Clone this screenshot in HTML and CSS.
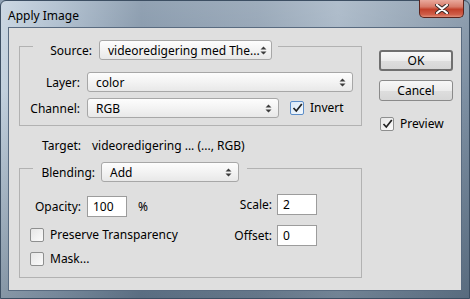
FILE: index.html
```html
<!DOCTYPE html>
<html lang="en">

<head>
    <meta charset="UTF-8">
    <meta name="viewport" content="width=device-width, initial-scale=1.0">
    <title>Apply Image</title>
    <link rel="stylesheet" href="styles.css">
</head>

<body>
    <div class="window">
        <div class="titlebar">
            <span class="title">Apply Image</span>
            <div class="close">
                <svg width="14" height="10" viewBox="0 0 14 10">
                    <path d="M2 1 L12 9 M12 1 L2 9" stroke="#3a2a28" stroke-width="4" stroke-linecap="round" />
                    <path d="M2 1 L12 9 M12 1 L2 9" stroke="#fff" stroke-width="2.2" stroke-linecap="round" />
                </svg>
            </div>
        </div>
        <div class="client">
            <div class="main">
                <div class="group group-source">
                    <div class="group-head head-source">
                        <span class="head-label">Source:</span>
                        <div class="select select-source">
                            <span>videoredigering med The...</span>
                            <svg class="arrows" width="7" height="9" viewBox="0 0 7 9"><path d="M0.5 3.5 L3.5 0.5 L6.5 3.5 Z M0.5 5.5 L3.5 8.5 L6.5 5.5 Z" /></svg>
                        </div>
                    </div>
                    <div class="row row-layer">
                        <span class="label">Layer:</span>
                        <div class="select select-layer">
                            <span>color</span>
                            <svg class="arrows" width="7" height="9" viewBox="0 0 7 9"><path d="M0.5 3.5 L3.5 0.5 L6.5 3.5 Z M0.5 5.5 L3.5 8.5 L6.5 5.5 Z" /></svg>
                        </div>
                    </div>
                    <div class="row row-channel">
                        <span class="label">Channel:</span>
                        <div class="select select-channel">
                            <span>RGB</span>
                            <svg class="arrows" width="7" height="9" viewBox="0 0 7 9"><path d="M0.5 3.5 L3.5 0.5 L6.5 3.5 Z M0.5 5.5 L3.5 8.5 L6.5 5.5 Z" /></svg>
                        </div>
                        <label class="option option-invert">
                            <span class="check focused">
                                <svg width="11" height="10" viewBox="0 0 11 10"><path d="M1.5 5 L4.3 8 L9.8 1" fill="none" stroke="#222" stroke-width="1.7" /></svg>
                            </span>
                            Invert
                        </label>
                    </div>
                </div>

                <div class="target">
                    <span class="label">Target:</span>
                    <span class="target-value">videoredigering ... (..., RGB)</span>
                </div>

                <div class="group group-blend">
                    <div class="group-head head-blend">
                        <span class="head-label">Blending:</span>
                        <div class="select select-blend">
                            <span>Add</span>
                            <svg class="arrows" width="7" height="9" viewBox="0 0 7 9"><path d="M0.5 3.5 L3.5 0.5 L6.5 3.5 Z M0.5 5.5 L3.5 8.5 L6.5 5.5 Z" /></svg>
                        </div>
                    </div>
                    <div class="blend-body">
                        <div class="blend-left">
                            <div class="row row-opacity">
                                <span class="label">Opacity:</span>
                                <span class="field">100</span>
                                <span class="unit">%</span>
                            </div>
                            <label class="option option-preserve">
                                <span class="check"></span>
                                Preserve Transparency
                            </label>
                            <label class="option option-mask">
                                <span class="check"></span>
                                Mask...
                            </label>
                        </div>
                        <div class="blend-right">
                            <div class="row row-scale">
                                <span class="label">Scale:</span>
                                <span class="field">2</span>
                            </div>
                            <div class="row row-offset">
                                <span class="label">Offset:</span>
                                <span class="field">0</span>
                            </div>
                        </div>
                    </div>
                </div>
            </div>

            <div class="side">
                <button class="btn btn-default">OK</button>
                <button class="btn btn-cancel">Cancel</button>
                <label class="option option-preview">
                    <span class="check">
                        <svg width="11" height="10" viewBox="0 0 11 10"><path d="M1.5 5 L4.3 8 L9.8 1" fill="none" stroke="#222" stroke-width="1.7" /></svg>
                    </span>
                    Preview
                </label>
            </div>
        </div>
    </div>
</body>

</html>
```

FILE: styles.css
```css
body {
    margin: 0;
    padding: 0;
    width: 470px;
    height: 299px;
    overflow: hidden;
    background-color: #8fa1b4;
    font-family: "Noto Sans", "Open Sans", Arial, sans-serif;
    font-size: 12px;
    color: #000;
}

.window {
    box-sizing: border-box;
    width: 470px;
    height: 299px;
    display: flex;
    flex-direction: column;
    padding: 0 7px 7px 7px;
    border: 1px solid #3d4f63;
    border-radius: 6px 6px 0 0;
    background:
        linear-gradient(to bottom, rgba(255, 255, 255, 0.15) 0%, rgba(0, 0, 0, 0) 30%, rgba(20, 40, 60, 0.35) 100%),
        linear-gradient(to right, #c3d1de 0%, #a9bacb 12%, #7f92a6 30%, #8e9fb1 55%, #a3b3c3 72%, #7d8fa2 100%);
}

.titlebar {
    height: 26px;
    display: flex;
    align-items: flex-start;
    justify-content: space-between;
}

.title {
    margin-top: 6px;
    font-size: 12px;
    color: #000;
}

.close {
    width: 45px;
    height: 18px;
    margin-top: -1px;
    margin-right: -2px;
    display: flex;
    align-items: center;
    justify-content: center;
    box-sizing: border-box;
    border: 1px solid #5c241d;
    border-top: none;
    border-radius: 0 0 5px 5px;
    background: linear-gradient(to bottom, #e9a99c 0%, #d77a68 40%, #c2402a 55%, #cf5d48 85%, #e08f7a 100%);
}

.client {
    flex: 1;
    display: flex;
    border: 1px solid #596b80;
    background-color: #dfdfdf;
}

.main {
    width: 343px;
    margin-left: 10px;
}

.group {
    border: 1px solid #b2b2b2;
}

.group-source {
    margin-top: 18px;
    padding-bottom: 7px;
}

.group-head {
    display: flex;
    align-items: center;
    width: fit-content;
    margin-top: -7px;
    margin-left: 13px;
    background-color: #dfdfdf;
}

.head-label {
    text-align: right;
}

.head-source {
    padding-right: 6px;
}

.head-source .head-label {
    width: 59px;
    margin-right: 7px;
}

.head-blend {
    padding-right: 8px;
}

.head-blend .head-label {
    width: 62px;
    margin-right: 6px;
}

.select {
    box-sizing: border-box;
    height: 20px;
    display: flex;
    align-items: center;
    justify-content: space-between;
    padding: 0 6px 0 8px;
    border: 1px solid #a7a7a7;
    border-radius: 3px;
    background: linear-gradient(to bottom, #fdfdfd 0%, #f3f3f3 50%, #e8e8e8 100%);
    white-space: nowrap;
}

.arrows {
    fill: #3c3c3c;
    flex-shrink: 0;
}

.select-source {
    width: 173px;
}

.select-layer {
    width: 266px;
}

.select-channel {
    width: 192px;
}

.select-blend {
    width: 138px;
}

.row {
    display: flex;
    align-items: center;
}

.label {
    text-align: right;
    flex-shrink: 0;
}

.group-source .row .label {
    width: 60px;
    margin-right: 7px;
}

.row-layer {
    margin-top: 12px;
}

.row-channel {
    margin-top: 6px;
}

.option {
    display: flex;
    align-items: center;
    line-height: 14px;
}

.check {
    box-sizing: border-box;
    width: 14px;
    height: 14px;
    margin-right: 6px;
    display: flex;
    align-items: center;
    justify-content: center;
    border: 1px solid #8e8f8f;
    border-radius: 2px;
    background: linear-gradient(to bottom right, #e6e6e6 0%, #fbfbfb 100%);
}

.check.focused {
    border-color: #5b8dc9;
    background: linear-gradient(to bottom right, #dbe9f7 0%, #f2f8fd 100%);
}

.option-invert {
    margin-left: 11px;
}

.target {
    display: flex;
    align-items: center;
    height: 20px;
    margin-top: 9px;
    padding-left: 1px;
}

.target .label {
    width: 61px;
    margin-right: 11px;
}

.group-blend {
    margin-top: 13px;
    padding-bottom: 11px;
}

.blend-body {
    display: flex;
    justify-content: space-between;
}

.field {
    box-sizing: border-box;
    width: 40px;
    height: 21px;
    display: flex;
    align-items: center;
    padding-left: 5px;
    border: 1px solid #9c9c9c;
    background-color: #fff;
}

.row-opacity {
    margin-top: 14px;
}

.row-opacity .label {
    width: 61px;
    margin-right: 6px;
}

.unit {
    margin-left: 11px;
}

.option-preserve {
    margin-top: 11px;
    margin-left: 10px;
}

.option-mask {
    margin-top: 10px;
    margin-left: 10px;
}

.blend-right {
    margin-right: 44px;
}

.blend-right .label {
    width: 50px;
    margin-right: 5px;
}

.row-scale {
    margin-top: 12px;
}

.row-offset {
    margin-top: 10px;
}

.side {
    display: flex;
    flex-direction: column;
    margin-left: 17px;
}

.btn {
    box-sizing: border-box;
    width: 74px;
    height: 21px;
    padding: 0;
    font-family: inherit;
    font-size: 12px;
    color: #000;
    border: 1px solid #8a8a8a;
    border-radius: 3px;
    background: linear-gradient(to bottom, #f7f7f7 0%, #ececec 50%, #dedede 51%, #d6d6d6 100%);
}

.btn-default {
    margin-top: 22px;
    border: 2px solid #6f6f6f;
}

.btn-cancel {
    margin-top: 9px;
}

.option-preview {
    margin-top: 16px;
    margin-left: 1px;
}
```
